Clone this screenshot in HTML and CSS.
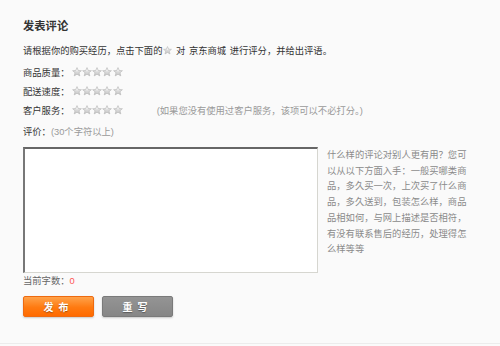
FILE: index.html
```html
<html>
    <head>
        <link rel="stylesheet" href="styles.css">
    </head>
    <body>
        <svg class="defs" width="0" height="0">
            <defs>
                <linearGradient id="starfill" x1="0" y1="0" x2="0" y2="1">
                    <stop offset="0" stop-color="#f2f2f2"/>
                    <stop offset="1" stop-color="#c4c4c4"/>
                </linearGradient>
                <symbol id="star" viewBox="0 0 20 20">
                    <polygon points="10,1.2 12.6,7 18.8,7.4 14,11.4 15.6,17.8 10,14.4 4.4,17.8 6,11.4 1.2,7.4 7.4,7" fill="url(#starfill)" stroke="#b4b4b4" stroke-width="1.2" stroke-linejoin="round"/>
                    <polygon points="10,4 11.4,8.4 8.6,8.4" fill="#fff" opacity=".8"/>
                </symbol>
            </defs>
        </svg>

        <div id="comment">
            <h3 class="title">发表评论</h3>
            <p class="intro">请根据你的购买经历，点击下面的<svg class="star star-inline"><use href="#star"/></svg> 对 京东商城 进行评分，并给出评语。</p>

            <div class="rate">
                <span class="rate-label">商品质量：</span>
                <span class="stars">
                    <svg class="star"><use href="#star"/></svg><svg class="star"><use href="#star"/></svg><svg class="star"><use href="#star"/></svg><svg class="star"><use href="#star"/></svg><svg class="star"><use href="#star"/></svg>
                </span>
            </div>
            <div class="rate">
                <span class="rate-label">配送速度：</span>
                <span class="stars">
                    <svg class="star"><use href="#star"/></svg><svg class="star"><use href="#star"/></svg><svg class="star"><use href="#star"/></svg><svg class="star"><use href="#star"/></svg><svg class="star"><use href="#star"/></svg>
                </span>
            </div>
            <div class="rate">
                <span class="rate-label">客户服务：</span>
                <span class="stars">
                    <svg class="star"><use href="#star"/></svg><svg class="star"><use href="#star"/></svg><svg class="star"><use href="#star"/></svg><svg class="star"><use href="#star"/></svg><svg class="star"><use href="#star"/></svg>
                </span>
                <span class="note">(如果您没有使用过客户服务，该项可以不必打分。)</span>
            </div>

            <div class="label">评价：<span class="note">(30个字符以上)</span></div>

            <div class="editor">
                <textarea></textarea>
                <p class="hint">什么样的评论对别人更有用？您可以从以下方面入手：一般买哪类商品，多久买一次，上次买了什么商品，多久送到，包装怎么样，商品品相如何，与网上描述是否相符，有没有联系售后的经历，处理得怎么样等等</p>
            </div>

            <div class="count">当前字数：<em>0</em></div>

            <div class="actions">
                <button class="btn btn-submit">发布</button>
                <button class="btn btn-reset">重写</button>
            </div>
        </div>
    </body>
</html>
```

FILE: styles.css
```css
html, body{
    margin: 0;
    height: 100%;
    background-color: #fafafa;
}
body{
    font-family: "Liberation Sans", "Noto Sans CJK SC", sans-serif;
    font-size: 9.3px;
    color: #333;
}
.defs{
    position: absolute;
}
#comment{
    height: 344px;
    box-sizing: border-box;
    border-bottom: solid 1px #ececec;
    padding: 18px 23px 0;
}
.title{
    margin: 0;
    font-size: 11.3px;
    line-height: 17px;
    font-weight: bold;
    color: #333;
}
.intro{
    margin: 8px 0 0;
    line-height: 17px;
    word-spacing: 1px;
}
.star{
    display: inline-block;
    width: 10px;
    height: 10px;
}
.star-inline{
    width: 9px;
    height: 9px;
    margin-left: 1px;
    vertical-align: -1px;
}
.rate{
    display: flex;
    align-items: center;
    height: 19px;
}
.rate:first-of-type{
    margin-top: 2px;
}
.stars{
    display: flex;
    gap: 0.3px;
    margin-left: 2px;
}
.rate .note{
    margin-left: 34px;
}
.note{
    color: #999;
}
.label{
    margin-top: 5px;
    line-height: 17px;
}
.editor{
    display: flex;
    margin-top: 6px;
}
.editor textarea{
    width: 295px;
    height: 126px;
    box-sizing: border-box;
    margin: 0;
    resize: none;
    background: #fff;
    border-style: solid;
    border-width: 2px 1px 1px 2px;
    border-color: #666 #d6d6d0 #d6d6d0 #777;
}
.hint{
    margin: 0 0 0 9px;
    padding-top: 1px;
    width: 15.3em;
    line-height: 15.7px;
    color: #8a8a8a;
}
.count{
    line-height: 17px;
    color: #666;
}
.count em{
    font-style: normal;
    color: #f55;
}
.actions{
    display: flex;
    gap: 8px;
    margin-top: 6px;
}
.btn{
    width: 71px;
    height: 21px;
    padding: 0;
    border-radius: 2px;
    font-family: "Liberation Sans", "Noto Sans CJK SC", sans-serif;
    font-size: 10px;
    font-weight: bold;
    letter-spacing: 5px;
    color: #fff;
    text-shadow: 0 1px 1px rgba(0, 0, 0, .35);
    box-shadow: 0 1px 2px rgba(0, 0, 0, .2);
}
.btn-submit{
    background: linear-gradient(#ffa24a, #ff7a10 55%, #ff6a00);
    border: solid 1px #ee6a10;
}
.btn-reset{
    background: linear-gradient(#949494, #868686);
    border: solid 1px #7a7a7a;
}
```
